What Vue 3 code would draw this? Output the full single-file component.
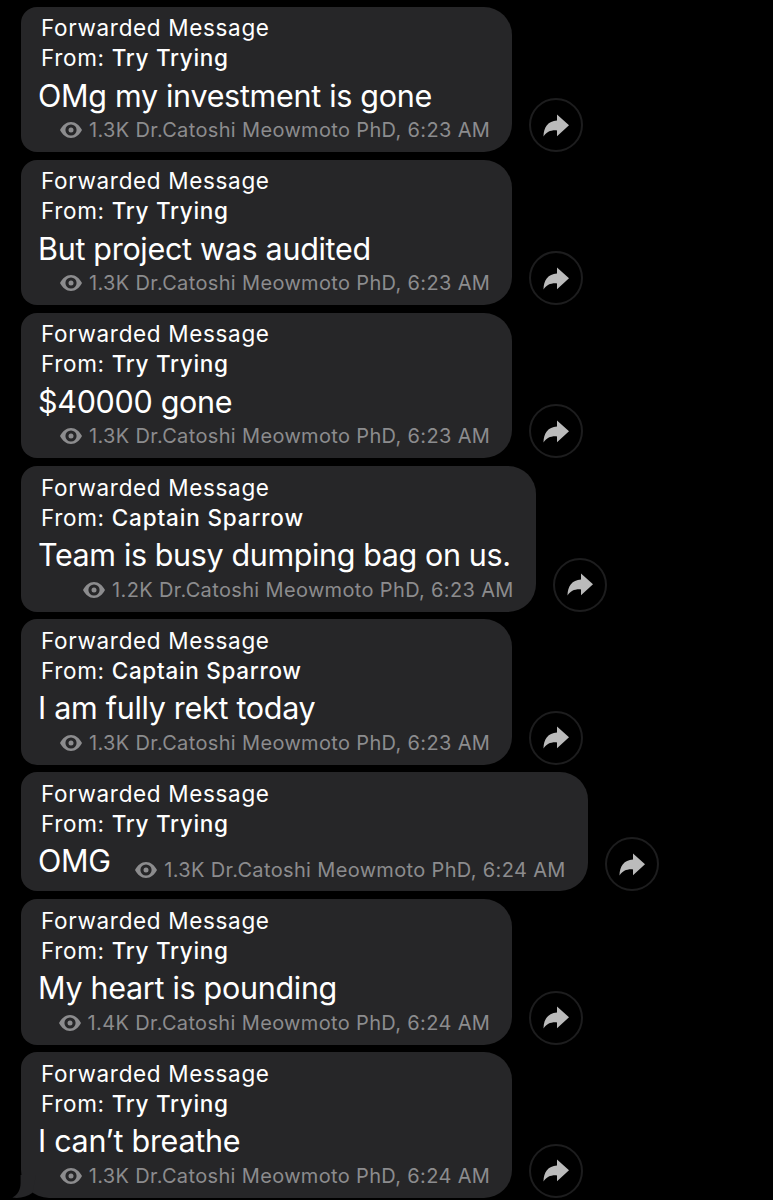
<script setup>
const messages = [
  { id: 1, from: 'Try Trying', text: 'OMg my investment is gone', views: '1.3K', time: '6:23 AM' },
  { id: 2, from: 'Try Trying', text: 'But project was audited', views: '1.3K', time: '6:23 AM' },
  { id: 3, from: 'Try Trying', text: '$40000 gone', views: '1.3K', time: '6:23 AM' },
  { id: 4, from: 'Captain Sparrow', text: 'Team is busy dumping bag on us.', views: '1.2K', time: '6:23 AM', size: 'wide' },
  { id: 5, from: 'Captain Sparrow', text: 'I am fully rekt today', views: '1.3K', time: '6:23 AM' },
  { id: 6, from: 'Try Trying', text: 'OMG', views: '1.3K', time: '6:24 AM', size: 'inline' },
  { id: 7, from: 'Try Trying', text: 'My heart is pounding', views: '1.4K', time: '6:24 AM' },
  { id: 8, from: 'Try Trying', text: 'I can’t breathe', views: '1.3K', time: '6:24 AM', last: true },
]
</script>

<template>
  <main class="chat">
    <article v-for="message in messages" :key="message.id" class="row">
      <div class="bubble" :class="[message.size, { last: message.last }]">
        <header class="forward">
          <div class="line">Forwarded Message</div>
          <div class="line">From: <strong>{{ message.from }}</strong></div>
        </header>
        <p class="text">{{ message.text }}</p>
        <footer class="meta">
          <svg class="eye" viewBox="0 0 22 16">
            <path
              fill-rule="evenodd"
              d="M0 8C2.6 3.2 6.4 0 11 0s8.4 3.2 11 8c-2.6 4.8-6.4 8-11 8S2.6 12.8 0 8ZM11 2.4a5.6 5.6 0 1 0 0 11.2a5.6 5.6 0 1 0 0-11.2Z"
            />
            <circle cx="11" cy="8" r="2.5" />
          </svg>
          <span>{{ message.views }} Dr.Catoshi Meowmoto PhD, {{ message.time }}</span>
        </footer>
        <svg v-if="message.last" class="tail" viewBox="0 0 24 24">
          <path d="M8.6 0V8C8.6 15 5.5 20 .3 22.6C8 23.6 15 22 20.5 17.8L24 0Z" />
        </svg>
      </div>
      <button class="share" type="button" aria-label="Share">
        <svg viewBox="0 0 26 23">
          <path d="M14 .6 26 11.2 14 22.2V16.4C7.5 16 3.5 18 .5 22.6C.6 13 5 7 14 6.4Z" />
        </svg>
      </button>
    </article>
  </main>
</template>

<style>
body {
  margin: 0;
  background: #000;
  overflow: hidden;
}
</style>

<style scoped>
.chat {
  box-sizing: border-box;
  height: 1200px;
  display: flex;
  flex-direction: column;
  gap: 7.8px;
  padding: 7px 0 0 20.6px;
  overflow: hidden;
  background: #000;
  color: #fff;
  font-family: Inter, 'Liberation Sans', sans-serif;
}

.row {
  display: flex;
  align-items: flex-end;
  gap: 17.1px;
}

.bubble {
  position: relative;
  box-sizing: border-box;
  display: flex;
  flex-direction: column;
  flex: none;
  width: 491.7px;
  height: 145.3px;
  padding: 6.3px 22px 0 17.4px;
  border-radius: 16px 28px 28px 16px;
  background: #262628;
  white-space: nowrap;
}

.bubble.wide {
  width: 515.2px;
}

.forward {
  padding-left: 3px;
  font-size: 22.5px;
  line-height: 30px;
  letter-spacing: 0.66px;
}

.forward strong {
  font-weight: 500;
  letter-spacing: 0.7px;
}

.wide .forward strong {
  letter-spacing: 0.85px;
}

.text {
  margin: -0.65px 0 0.65px;
  font-size: 30.5px;
  line-height: 45px;
  letter-spacing: -0.3px;
}

.wide .text {
  letter-spacing: -0.38px;
}

.meta {
  display: flex;
  align-items: center;
  align-self: flex-end;
  gap: 7px;
  height: 24px;
  color: #8c8c8e;
  font-size: 20px;
  letter-spacing: 0.35px;
}

.eye {
  width: 22px;
  height: 16px;
  fill: currentColor;
}

.bubble.inline {
  display: grid;
  grid-template-columns: 1fr auto;
  grid-template-rows: 60px 45px;
  width: 567.2px;
  height: 119px;
}

.inline .forward {
  grid-column: 1 / -1;
}

.inline .meta {
  align-self: end;
  margin-bottom: 2px;
}

.bubble.last {
  border-bottom-left-radius: 28px;
}

.tail {
  position: absolute;
  left: -8.6px;
  bottom: -1px;
  width: 24px;
  height: 24px;
  fill: #262628;
}

.share {
  box-sizing: border-box;
  display: flex;
  align-items: center;
  justify-content: center;
  width: 54px;
  height: 54px;
  padding: 0;
  border: 2px solid #1d1d1e;
  border-radius: 50%;
  background: #000;
}

.share svg {
  width: 26px;
  height: 23px;
  fill: #bbb;
}
</style>
